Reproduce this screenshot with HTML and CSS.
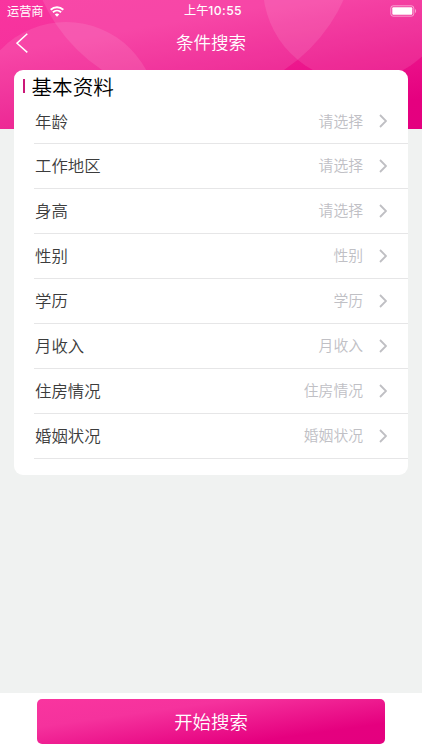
FILE: index.html
```html
<!DOCTYPE html>
<html lang="zh-CN">
<head>
  <meta charset="UTF-8">
  <meta name="viewport" content="width=device-width, initial-scale=1.0">
  <title>条件搜索</title>
  <link rel="stylesheet" href="styles.css">
</head>
<body>
  <main>
    <header class="header">
      <svg class="header-bg" viewBox="0 0 422 130">
        <circle cx="66" cy="113" r="91"/>
        <circle cx="193" cy="-67.6" r="165"/>
        <circle cx="358" cy="-13.6" r="95"/>
      </svg>
      <div class="status">
        <div class="carrier">
          <span>运营商</span>
          <svg class="wifi" width="14" height="11" viewBox="0 0 14 11">
            <path d="M0.7 3.8 C4.3 0.3 9.7 0.3 13.3 3.8" />
            <path d="M2.9 6.3 C5.3 4 8.7 4 11.1 6.3" />
            <path class="dot" d="M7 10.7 L4.8 8.4 C6.1 7.2 7.9 7.2 9.2 8.4 Z" />
          </svg>
        </div>
        <div class="clock">上午<span class="time">10:55</span></div>
        <svg class="battery" width="27" height="12" viewBox="0 0 27 12">
          <rect class="shell" x="0.8" y="0.8" width="23" height="10.4" rx="2.4"/>
          <rect x="2.3" y="2.3" width="20" height="7.4" rx="1"/>
          <path class="tip" d="M25 4 C26.5 4.6 26.5 7.4 25 8 Z"/>
        </svg>
      </div>
      <div class="nav">
        <svg class="back" width="12" height="20" viewBox="0 0 12 20">
          <path d="M11.3 0.8 L1 10.2 L11.3 19.4"/>
        </svg>
        <h1>条件搜索</h1>
      </div>
    </header>

    <section class="card">
      <h2>基本资料</h2>
      <ul class="list">
        <li><span class="label">年龄</span><span class="value">请选择</span><svg class="arrow" viewBox="0 0 8 14"><path d="M1 1 L7 7 L1 13"/></svg></li>
        <li><span class="label">工作地区</span><span class="value">请选择</span><svg class="arrow" viewBox="0 0 8 14"><path d="M1 1 L7 7 L1 13"/></svg></li>
        <li><span class="label">身高</span><span class="value">请选择</span><svg class="arrow" viewBox="0 0 8 14"><path d="M1 1 L7 7 L1 13"/></svg></li>
        <li><span class="label">性别</span><span class="value">性别</span><svg class="arrow" viewBox="0 0 8 14"><path d="M1 1 L7 7 L1 13"/></svg></li>
        <li><span class="label">学历</span><span class="value">学历</span><svg class="arrow" viewBox="0 0 8 14"><path d="M1 1 L7 7 L1 13"/></svg></li>
        <li><span class="label">月收入</span><span class="value">月收入</span><svg class="arrow" viewBox="0 0 8 14"><path d="M1 1 L7 7 L1 13"/></svg></li>
        <li><span class="label">住房情况</span><span class="value">住房情况</span><svg class="arrow" viewBox="0 0 8 14"><path d="M1 1 L7 7 L1 13"/></svg></li>
        <li><span class="label">婚姻状况</span><span class="value">婚姻状况</span><svg class="arrow" viewBox="0 0 8 14"><path d="M1 1 L7 7 L1 13"/></svg></li>
      </ul>
    </section>

    <footer class="footer">
      <button class="submit">开始搜索</button>
    </footer>
  </main>
</body>
</html>
```
FILE: styles.css
```css
* {
  margin: 0;
  padding: 0;
  box-sizing: border-box;
}
body {
  font-family: "Noto Sans CJK SC", sans-serif;
  font-weight: 350;
  background-color: #f0f2f1;
}
main {
  width: 100%;
  height: 100vh;
  display: flex;
  flex-direction: column;
  overflow: hidden;
}

/* Header */
.header {
  position: relative;
  flex: none;
  height: 129px;
  color: white;
  background: linear-gradient(170deg, #f9349f 0%, #f6329d 25%, #e5007f 85%, #e4007f 100%);
}
.header-bg {
  position: absolute;
  top: 0;
  left: 0;
  width: 422px;
  height: 130px;
  clip-path: inset(0 0 1px 0);
}
.header-bg circle {
  fill: rgba(255, 255, 255, 0.1);
}
.status {
  position: relative;
  display: grid;
  grid-template-columns: 1fr auto 1fr;
  align-items: center;
  height: 22px;
  padding: 0 5px 0 7px;
  font-size: 12.2px;
  font-weight: 400;
  line-height: 20px;
}
.carrier {
  display: flex;
  align-items: center;
  gap: 6px;
}
.carrier span {
  margin-top: -1px;
}
.clock {
  height: 22px;
  padding-left: 2px;
}
.time {
  font-family: Inter, sans-serif;
  font-weight: 500;
  letter-spacing: 0.4px;
  line-height: 1;
}
.wifi path {
  fill: none;
  stroke: white;
  stroke-width: 1.9;
}
.wifi .dot {
  fill: white;
  stroke: none;
}
.battery {
  justify-self: end;
  fill: white;
}
.battery .shell {
  fill: none;
  stroke: rgba(255, 255, 255, 0.5);
}
.battery .tip {
  fill: rgba(255, 255, 255, 0.5);
}
.nav {
  position: relative;
  display: grid;
  grid-template-columns: 1fr auto 1fr;
  align-items: center;
  height: 41px;
  padding: 0 16px;
}
.back path {
  fill: none;
  stroke: white;
  stroke-width: 1.5;
}
.nav h1 {
  margin-top: -2px;
  font-size: 17.5px;
  font-weight: 350;
  line-height: 40px;
}

/* Card */
.card {
  position: relative;
  flex: none;
  width: 393.6px;
  height: 405px;
  margin: -59px 0 0 14px;
  background-color: white;
  border-radius: 9px;
}
.card h2 {
  display: flex;
  align-items: center;
  gap: 6.5px;
  height: 29px;
  padding: 4px 0 0 9px;
  color: #000;
  font-size: 20.6px;
  font-weight: 350;
  line-height: 25px;
}
.card h2::before {
  content: "";
  width: 2px;
  height: 14px;
  margin-top: -2px;
  background-color: #cb1878;
}
.list {
  list-style: none;
  margin-left: 20px;
}
.list li {
  display: flex;
  align-items: center;
  height: 44.95px;
  padding: 0 20.6px 1px 1px;
  border-bottom: 1px solid #e6e6e7;
}
.list li:first-child {
  height: 45px;
}
.label {
  flex: 1;
  color: #3c3c3c;
  font-size: 16.4px;
}
.value {
  margin-top: -1px;
  color: #c0c0c5;
  font-size: 14.8px;
}
.arrow {
  width: 8px;
  height: 14px;
  margin: 1px 0 0 16px;
}
.arrow path {
  fill: none;
  stroke: #bfbfc3;
  stroke-width: 1.8;
}

/* Bottom button */
.footer {
  flex: none;
  height: 57px;
  margin-top: auto;
  padding: 6px 37px;
  background-color: white;
}
.submit {
  width: 348px;
  height: 45px;
  padding-bottom: 2px;
  border: none;
  border-radius: 5px;
  color: white;
  font-family: inherit;
  font-weight: 350;
  font-size: 18.4px;
  cursor: pointer;
  background: linear-gradient(172deg, #f9359f 0%, #f5329d 30%, #e5007f 78%, #e4007f 100%);
}
```
